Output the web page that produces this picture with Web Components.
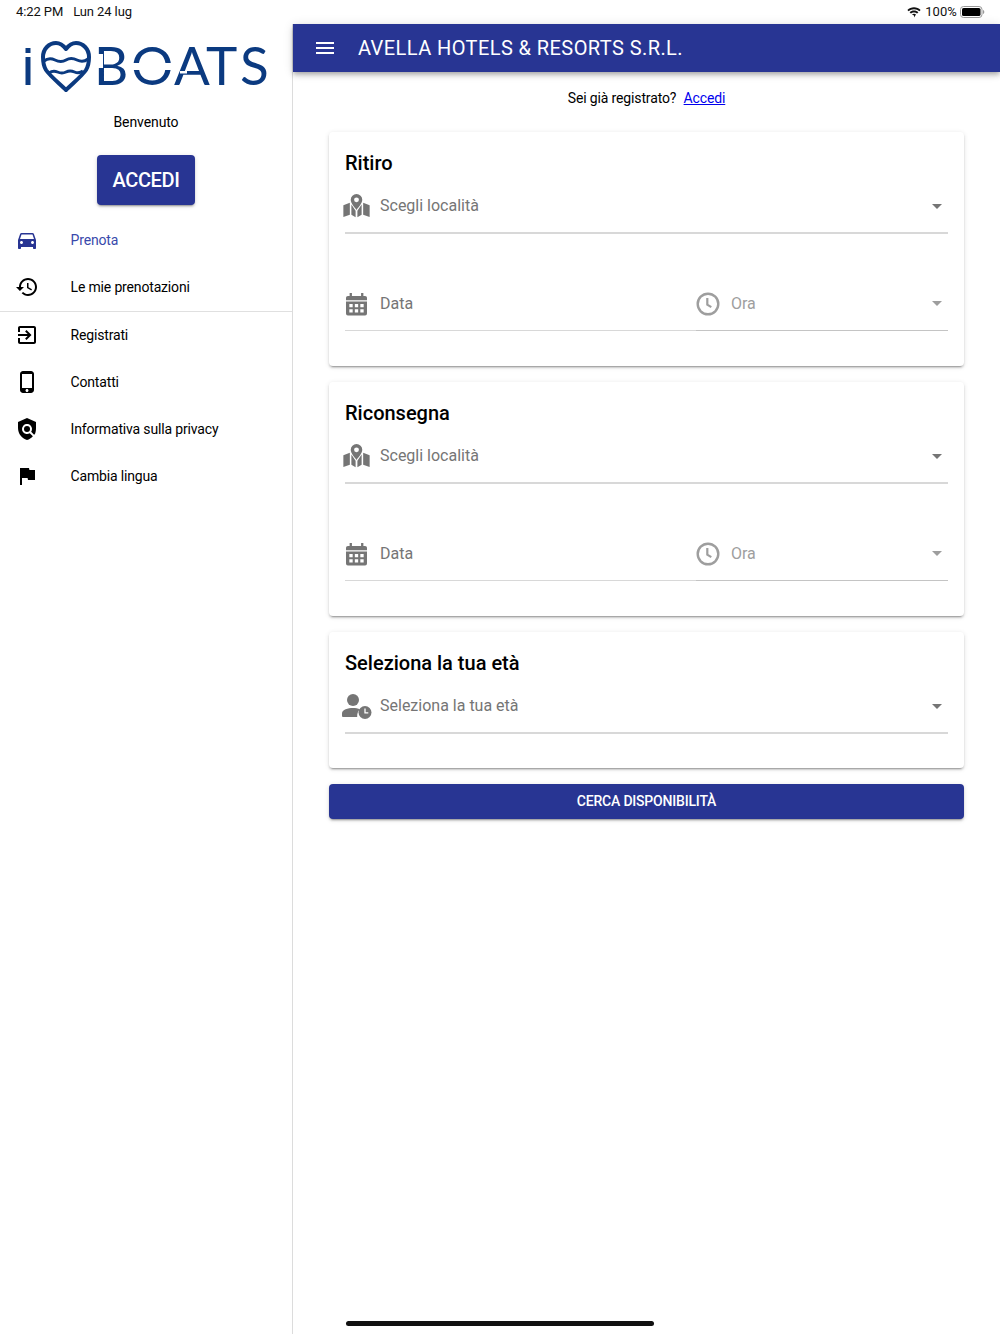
<!doctype html>
<html lang="it"><head><meta charset="utf-8"><title>Prenota</title>
<style>
html,body{margin:0;padding:0;height:100%;background:#fff}
body{font-family:Roboto,"Liberation Sans",sans-serif;color:#000}
</style></head><body>
<app-shell>
  <status-bar slot="status"></status-bar>
  <side-menu slot="side"></side-menu>
  <top-bar slot="top" title="AVELLA HOTELS &amp; RESORTS S.R.L."></top-bar>
  <div slot="main">
    <login-hint></login-hint>
    <form-card heading="Ritiro">
      <select-row icon="map" label="Scegli località"></select-row>
      <div class="pair" style="display:flex;margin-top:41px">
        <select-row icon="cal" label="Data" noarrow style="flex:1 1 0"></select-row>
        <select-row icon="clock" label="Ora" faded style="width:252px"></select-row>
      </div>
    </form-card>
    <form-card heading="Riconsegna">
      <select-row icon="map" label="Scegli località"></select-row>
      <div class="pair" style="display:flex;margin-top:41px">
        <select-row icon="cal" label="Data" noarrow style="flex:1 1 0"></select-row>
        <select-row icon="clock" label="Ora" faded style="width:252px"></select-row>
      </div>
    </form-card>
    <form-card heading="Seleziona la tua età" style="--pb:34px">
      <select-row icon="age" label="Seleziona la tua età"></select-row>
    </form-card>
    <search-button>CERCA DISPONIBILITÀ</search-button>
  </div>
</app-shell>
<script>
const ICONS={
 map:'<svg style="margin-left:-1px" width="27" height="24" viewBox="0 0 30 26.500"><path fill="currentColor" d="M15 0a6.4 6.4 0 0 0-6.4 6.4c0 4 4.2 8.2 6.4 11.3 2.2-3.1 6.4-7.300 6.400-11.300A6.400 6.400 0 0 0 15 0zm0 3.700a2.700 2.700 0 1 1 0 5.400 2.700 2.700 0 0 1 0-5.400z"/><path fill="currentColor" d="M7.600 9.600 0.400 12.300v13.200l7.200-2.600zM9.300 11.700v11.300l4.700 2.800v-7.400zM16 18.400v7.400l4.700-2.800V11.700zM22.400 9.600v13.300l7.200 2.600V12.300z"/></svg>',
 cal:'<svg style="margin-left:-1px" width="21" height="24" viewBox="0 0 22 24"><path fill="currentColor" fill-rule="evenodd" d="M3.800 0.500h2.400v3h9.600v-3h2.400v3H20a2 2 0 0 1 2 2V8H0V5.500a2 2 0 0 1 2-2h1.800zM0 9.500h22V22a2 2 0 0 1-2 2H2a2 2 0 0 1-2-2zM3.500 12v3.500h3.500V12zm5.750 0v3.500h3.500V12zm5.750 0v3.500h3.500V12zM3.500 17.500V21h3.500v-3.500zm5.750 0V21h3.500v-3.500zm5.750 0V21h3.500v-3.500z"/></svg>',
 clock:'<svg width="24" height="24" viewBox="0 0 24 24"><circle cx="12" cy="12" r="10.300" fill="none" stroke="currentColor" stroke-width="2.400"/><path fill="none" stroke="currentColor" stroke-width="2.200" d="M11.300 6v6.700l4 2.400"/></svg>',
 age:'<svg width="30" height="25" viewBox="0 0 30 25"><circle cx="11" cy="6" r="6" fill="currentColor"/><path fill="currentColor" d="M0 23v-3.500C0 15.500 6 14 11 14c2.500 0 5 .4 7 1.200-2 1.800-3 4.300-2.800 7.800H1a1 1 0 0 1-1-1z"/><circle cx="23" cy="18.500" r="6.500" fill="currentColor"/><path fill="none" stroke="#fff" stroke-width="1.300" d="M23 14.500v4.300h3.300"/></svg>'
};
const NAV={
 car:'<path d="M18.920 6.010C18.720 5.420 18.160 5 17.500 5h-11c-.66 0-1.210.42-1.420 1.010L3 12v8c0 .55.45 1 1 1h1c.55 0 1-.45 1-1v-1h12v1c0 .55.45 1 1 1h1c.55 0 1-.45 1-1v-8l-2.080-5.990zM6.500 16c-.83 0-1.500-.67-1.500-1.500S5.670 13 6.500 13s1.500.67 1.500 1.500S7.330 16 6.500 16zm11 0c-.83 0-1.500-.67-1.500-1.500s.67-1.500 1.500-1.500 1.500.67 1.500 1.500-.67 1.500-1.500 1.500zM5 11l1.500-4.500h11L19 11H5z"/>',
 history:'<path d="M13 3c-4.970 0-9 4.030-9 9H1l3.890 3.890.07.140L9 12H6c0-3.870 3.130-7 7-7s7 3.130 7 7-3.130 7-7 7c-1.930 0-3.680-.79-4.940-2.060l-1.420 1.420C8.270 19.990 10.510 21 13 21c4.970 0 9-4.030 9-9s-4.030-9-9-9zm-1 5v5l4.280 2.540.72-1.210-3.500-2.080V8H12z"/>',
 exit:'<path d="M10.090 15.590 11.500 17l5-5-5-5-1.410 1.410L12.670 11H3v2h9.670l-2.580 2.590zM19 3H5c-1.110 0-2 .9-2 2v4h2V5h14v14H5v-4H3v4c0 1.100.89 2 2 2h14c1.100 0 2-.9 2-2V5c0-1.100-.9-2-2-2z"/>',
 phone:'<path fill-rule="evenodd" d="M16 1H8C6.340 1 5 2.340 5 4v16c0 1.660 1.340 3 3 3h8c1.660 0 3-1.340 3-3V4c0-1.660-1.340-3-3-3zm-4 21c-.830 0-1.500-.670-1.500-1.500S11.170 19 12 19s1.500.670 1.500 1.500S12.830 22 12 22zm5-4H7V4h10v14z"/>',
 shield:'<path fill-rule="evenodd" d="M12 1 3 5v6c0 5.550 3.840 10.740 9 12 2.300-.56 4.330-1.900 5.880-3.710l-3.120-3.120c-1.940 1.290-4.580 1.070-6.290-.64-1.950-1.950-1.950-5.120 0-7.070s5.120-1.950 7.070 0c1.710 1.710 1.920 4.350.64 6.290l2.900 2.900C20.290 17.580 21 14.400 21 11V5l-9-4z"/><circle cx="12" cy="12" r="3"/>',
 flag:'<path d="M14.400 6 14 4H5v17h2v-7h5.600l.4 2h7V6z"/>'
};
function def(name,html){
  customElements.define(name,class extends HTMLElement{
    connectedCallback(){
      if(this.shadowRoot)return;
      const r=this.attachShadow({mode:'open'});
      r.innerHTML=typeof html==='function'?html(this):html;
    }
  });
}
def('app-shell',`<style>
:host{display:grid;grid-template-columns:293px 1fr;grid-template-rows:24px 48px 1fr;height:1334px;width:1000px;overflow:hidden;position:relative}
.s{grid-column:1/3;grid-row:1}
.side{grid-column:1;grid-row:2/4;border-right:1px solid #dcdcdc;box-sizing:border-box}
.top{grid-column:2;grid-row:2;z-index:1}
.main{grid-column:2;grid-row:3;padding:0 36px 0 36px;box-sizing:border-box}
.home{position:absolute;left:346px;top:1321px;width:308px;height:5px;border-radius:3px;background:#111}
</style>
<div class="s"><slot name="status"></slot></div>
<div class="side"><slot name="side"></slot></div>
<div class="top"><slot name="top"></slot></div>
<div class="main"><slot name="main"></slot></div>
<div class="home"></div>`);
def('status-bar',`<style>
:host{display:flex;align-items:center;height:24px;padding:0 15px 0 16px;font:13px/24px Roboto,"Liberation Sans",sans-serif;color:#111;letter-spacing:-.1px}
.t{margin-right:10px}.g{flex:1}
.p{margin:0 3px 0 4px;letter-spacing:.1px}
svg{display:block}
</style><span class="t">4:22 PM</span><span>Lun 24 lug</span><span class="g"></span>
<svg width="14" height="11" viewBox="0 0 14 11"><path fill="#111" d="M7 2.200c2.100 0 4 .8 5.400 2.100L13.600 3C11.800 1.300 9.500.3 7 .3S2.200 1.300.4 3l1.200 1.300C3 3 4.900 2.200 7 2.200zm0 3.200c1.200 0 2.300.5 3.100 1.200l1.300-1.300C10.200 4.200 8.700 3.600 7 3.600s-3.200.6-4.400 1.700l1.300 1.300C4.700 5.900 5.800 5.400 7 5.400zm0 3.100L5 7.500c.5-.4 1.200-.7 2-.7s1.500.3 2 .7L7 10.500z"/></svg>
<span class="p">100%</span>
<svg width="25" height="12" viewBox="0 0 25 12"><rect x=".5" y=".5" width="21.500" height="11" rx="3" fill="none" stroke="#999"/><rect x="2" y="2" width="18.500" height="8" rx="1.600" fill="#000"/><path d="M23 4v4c.8-.3 1.300-1.100 1.300-2S23.800 4.300 23 4z" fill="#999"/></svg>`);
def('top-bar',t=>`<style>
:host{display:flex;align-items:center;height:48px;background:#283593;color:#fff;box-shadow:0 2px 4px -1px rgba(0,0,0,.2),0 4px 5px 0 rgba(0,0,0,.14),0 1px 10px 0 rgba(0,0,0,.12);position:relative}
svg{margin-left:20px;display:block}
span{margin-left:21px;font:20px/48px Roboto,"Liberation Sans",sans-serif;letter-spacing:.42px}
</style><svg width="24" height="24" viewBox="0 0 24 24"><path fill="#fff" d="M3 18h18v-2H3zm0-5h18v-2H3zm0-7v2h18V6z"/></svg><span>${t.getAttribute('title').replace('&','&amp;')}</span>`);
def('app-logo',`<style>
:host{display:block;height:78px}
svg{display:block;overflow:visible}
text{font-family:Lato,"Liberation Sans",sans-serif;fill:#0b3a80}
</style>
<svg width="292" height="78" viewBox="0 0 292 78">
 <rect x="25.500" y="24" width="5" height="5" fill="#0b3a80"/><rect x="25.500" y="33" width="5" height="28" fill="#0b3a80"/>
 <path fill="none" stroke="#0b3a80" stroke-width="4" stroke-linejoin="round" d="M66 66C60 60 50 52 46 46 43 41 43 37 43 33 43 25 49 19 56 19 60 19 63 21 66 25 69 21 72 19 76 19 83 19 89 25 89 33 89 37 89 41 86 46 82 52 72 60 66 66Z"/>
 <path fill="none" stroke="#0b3a80" stroke-width="3" d="M44 37q5-4 11-1t11 0 11 0 11-1"/>
 <path fill="none" stroke="#0b3a80" stroke-width="3" d="M49 49q4-3 8.500-1t8.500 0 8.500 0 8.500-1"/>
 <text y="61" font-size="53" font-weight="400" x="94 131 174 206 240">BOATS</text>
 <rect x="94" y="30" width="9" height="14" fill="#fff"/>
 <rect x="132" y="39" width="8" height="7" fill="#fff"/><rect x="165" y="39" width="8" height="7" fill="#fff"/>
 <rect x="180" y="47" width="7" height="2.500" fill="#fff"/>
</svg>`);
def('side-menu',()=>{
 const it=(ic,l,c='')=>`<div class="i ${c}"><svg width="24" height="24" viewBox="0 0 24 24" fill="currentColor">${NAV[ic]}</svg><span>${l}</span></div>`;
 return `<style>
:host{display:block;font:14px/20px Roboto,"Liberation Sans",sans-serif}
.w{text-align:center;margin-top:10px;height:20px;line-height:20px;letter-spacing:-.1px}
.b{display:block;box-sizing:border-box;margin:23px auto 0;width:98px;height:50px;border-radius:4px;background:#283593;color:#fff;text-align:center;font:500 20px/50px Roboto,"Liberation Sans",sans-serif;letter-spacing:-.4px;box-shadow:0 3px 1px -2px rgba(0,0,0,.2),0 2px 2px 0 rgba(0,0,0,.14),0 1px 5px 0 rgba(0,0,0,.12)}
nav{margin-top:11px;letter-spacing:-.16px}
.i{display:flex;align-items:center;height:47px;padding-left:15px}
.i svg{display:block;flex:none}
.i span{margin-left:31.500px}
.on{color:#283593}
.on span{color:#3949ab}
hr{margin:1px 0 -1px;border:0;border-top:1px solid #e0e0e0}
</style>
<app-logo></app-logo>
<div class="w">Benvenuto</div>
<div class="b">ACCEDI</div>
<nav>${it('car','Prenota','on')}${it('history','Le mie prenotazioni')}<hr>${it('exit','Registrati')}${it('phone','Contatti')}${it('shield','Informativa sulla privacy')}${it('flag','Cambia lingua')}</nav>`});
def('login-hint',`<style>
:host{display:block;height:60px;text-align:center;font:14px/52px Roboto,"Liberation Sans",sans-serif;letter-spacing:-.14px}
a{color:#0000ee;text-decoration:underline;margin-left:4px}
</style>Sei già registrato? <a href="#">Accedi</a>`);
def('form-card',t=>`<style>
:host{display:block;background:#fff;border-radius:4px;padding:16px 16px 0;margin-bottom:16px;box-shadow:0 3px 1px -2px rgba(0,0,0,.2),0 2px 2px 0 rgba(0,0,0,.14),0 1px 5px 0 rgba(0,0,0,.12);box-sizing:border-box}
h2{margin:0;font:500 20px/30px Roboto,"Liberation Sans",sans-serif;color:#000}
.b{padding-bottom:var(--pb,35px)}
</style><h2>${t.getAttribute('heading')}</h2><div class="b"><slot></slot></div>`);
def('select-row',t=>{
 const f=t.hasAttribute('faded'),thick=['map','age'].includes(t.getAttribute('icon'));
 const col=f?'#9e9e9e':'#757575';
 return `<style>
:host{display:flex;align-items:center;height:56px;box-sizing:border-box;border-bottom:${thick?'2px solid #d8d8d8':'1px solid '+(f?'#c4c4c4':'#d8d8d8')};padding-top:2px;color:${col};font:16px/24px Roboto,"Liberation Sans",sans-serif}
.ic{width:24px;height:24px;display:flex;align-items:center;justify-content:center;flex:none}
svg{display:block;flex:none}
.l{margin-left:11px;flex:1}
.a{width:0;height:0;border:5px solid transparent;border-top-color:${col};border-bottom:0;margin-right:6.500px}
</style><div class="ic">${ICONS[t.getAttribute('icon')]}</div><span class="l">${t.getAttribute('label')}</span>${t.hasAttribute('noarrow')?'':'<i class="a"></i>'}`});
def('search-button',`<style>
:host{display:block;height:35px;border-radius:4px;background:#283593;color:#fff;text-align:center;font:500 14px/35px Roboto,"Liberation Sans",sans-serif;letter-spacing:-.2px;box-shadow:0 3px 1px -2px rgba(0,0,0,.2),0 2px 2px 0 rgba(0,0,0,.14),0 1px 5px 0 rgba(0,0,0,.12)}
</style><slot></slot>`);
</script>
</body></html>
